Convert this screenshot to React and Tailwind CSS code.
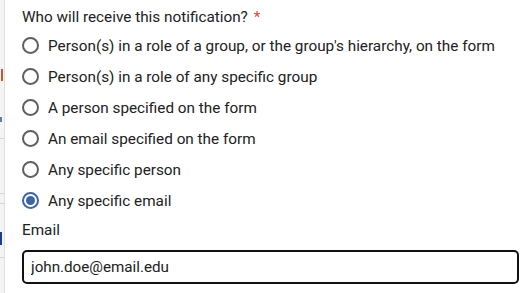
import { useState } from 'react';

const OPTIONS = [
  "Person(s) in a role of a group, or the group's hierarchy, on the form",
  'Person(s) in a role of any specific group',
  'A person specified on the form',
  'An email specified on the form',
  'Any specific person',
  'Any specific email',
];

const Radio = ({ label, checked, onSelect }) => {
  return (
    <label className="h-[31px] flex items-center gap-[9px] cursor-pointer" onClick={onSelect}>
      <span
        className={`w-[17px] h-[17px] rounded-full border-2 flex items-center justify-center shrink-0 ${
          checked ? 'border-[#3d64a8]' : 'border-[#5f5f5f]'
        }`}
      >
        {checked && <span className="w-[9px] h-[9px] rounded-full bg-[#3d64a8]" />}
      </span>
      <span className="text-[15.3px] leading-5 text-[#212121]">{label}</span>
    </label>
  );
};

export default function App() {
  const [selected, setSelected] = useState(5);
  const [email, setEmail] = useState('john.doe@email.edu');

  return (
    <div className="w-[527px] h-[293px] flex bg-white overflow-hidden" style={{ fontFamily: 'Roboto, "Liberation Sans", sans-serif' }}>
      {/* bit of the page behind the panel */}
      <div className="w-[5px] shrink-0 bg-[#f4f4f4] border-r border-[#e0e0e0] flex flex-col">
        <span className="mt-[69px] ml-[1px] w-[2px] h-[12px] bg-[#c2582e]" />
        <span className="mt-[36px] w-[2px] h-[5px] bg-[#5b7fb8]" />
        <span className="mt-[16px] h-px bg-[#d6d6d6]" />
        <span className="mt-[54px] h-px bg-[#d6d6d6]" />
        <span className="mt-[9px] h-px bg-[#d6d6d6]" />
        <span className="mt-[28px] w-[2px] h-[13px] bg-[#1c3f8f]" />
        <span className="mt-[12px] h-px bg-[#d6d6d6]" />
      </div>

      <div className="flex-1 pl-[17px] pr-[8px] pt-[7px]">
        <div className="text-[15.3px] leading-5 text-[#212121]">
          Who will receive this notification? <span className="ml-[2px] text-[#d9472b]">*</span>
        </div>

        <div className="mt-[3px] flex flex-col">
          {OPTIONS.map((opt, i) => (
            <Radio key={opt} label={opt} checked={selected === i} onSelect={() => setSelected(i)} />
          ))}
        </div>

        <div className="mt-[4px] text-[15.3px] leading-5 text-[#212121]">Email</div>
        <input
          className="mt-[10px] w-full h-[34px] border-2 border-[#111] rounded-[5px] px-[7px] text-[15.2px] text-[#212121] outline-none"
          value={email}
          onChange={(e) => setEmail(e.target.value)}
        />
      </div>
    </div>
  );
}
